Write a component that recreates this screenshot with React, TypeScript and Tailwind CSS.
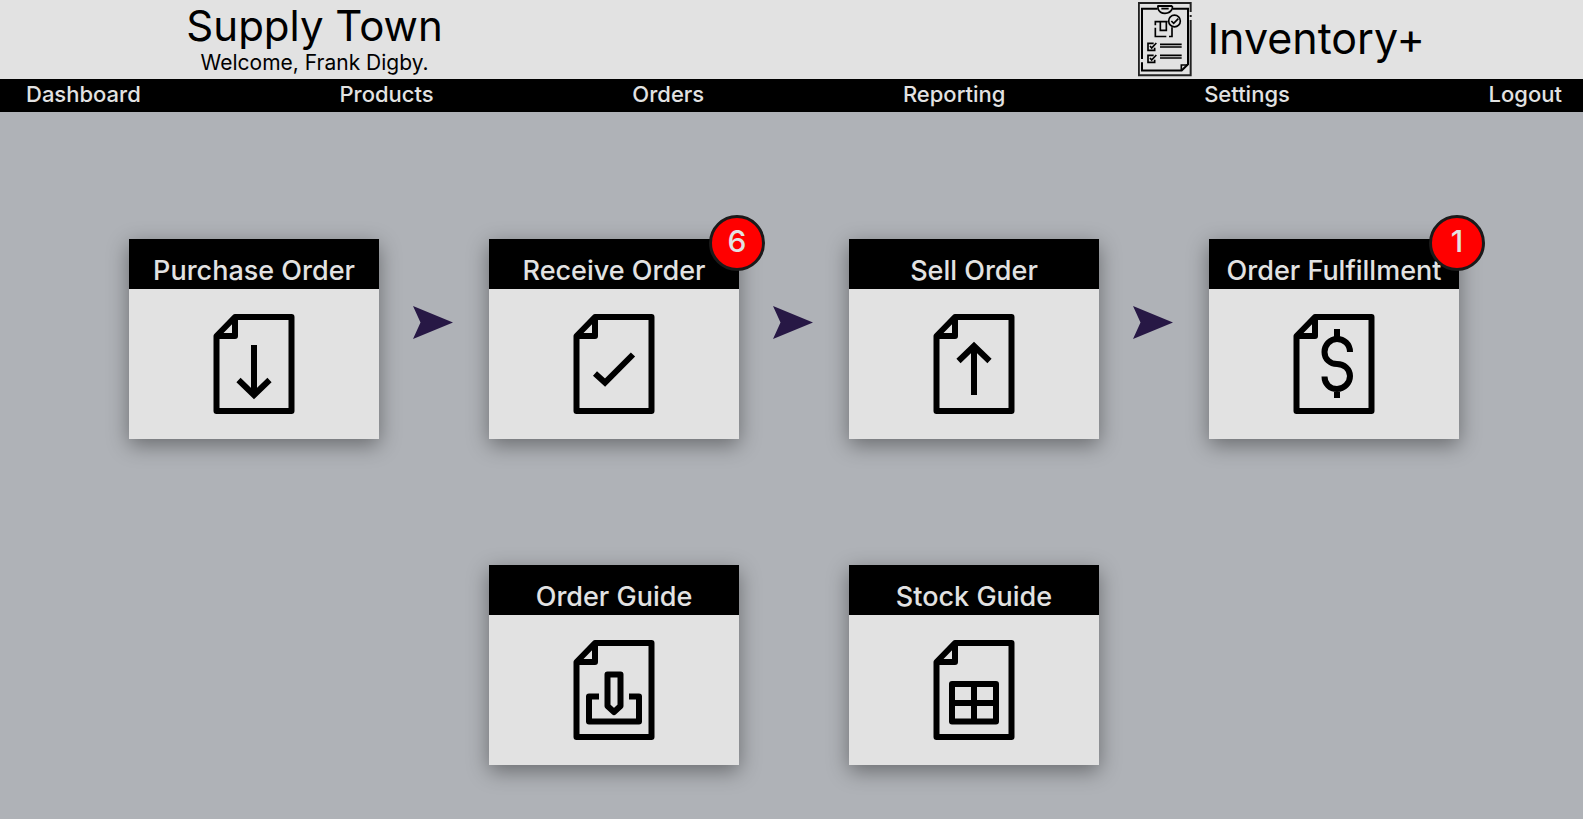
import type { ReactNode } from "react";

const navItems = ["Dashboard", "Products", "Orders", "Reporting", "Settings", "Logout"];

function Logo() {
  return (
    <svg viewBox="12 6 162 225" className="h-[75px] w-[54px]" fill="none" stroke="#000" strokeWidth="6" aria-hidden="true">
      <path d="M170 36V9H14.500V226H170V60M170 45v6" stroke="#222" />
      <path d="M70 26.500H24V177M24 187V211.500H143L162 193V26.500H117" />
      <path d="M142 210V195H162" strokeWidth="5" />
      <path d="M70 18H115" />
      <path d="M72 18V26Q77 40 93 40Q109 40 115 26V18M82 26H104" strokeWidth="5" />
      <path d="M64 76V65H101M64 83V109.500H97M105 109.500H114V82M79 66V91H97V66" strokeWidth="5" />
      <circle cx="121.500" cy="63" r="17.500" strokeWidth="5" />
      <path d="M112 63L119 70L133 56" strokeWidth="5" />
      <path d="M59 130H42V151H62V143M48 138L53 144L67 129" strokeWidth="5" />
      <path d="M59 166H42V187H62V179M48 174L53 180L67 165" strokeWidth="5" />
      <path d="M78 133H143M78 141H143M78 166H143M78 174H143" strokeWidth="5" />
    </svg>
  );
}

function DocIcon({ children }: { children: ReactNode }) {
  return (
    <svg viewBox="0 0 82 100" className="h-[100px] w-[82px]" fill="none" stroke="#000" strokeWidth="6" aria-hidden="true">
      <path d="M22 3H78.500V97H3.500V22Z" strokeLinejoin="round" />
      <path d="M22 3V22H3.500" strokeLinejoin="round" />
      {children}
    </svg>
  );
}

function Card({ title, badge, children }: { title: string; badge?: number; children: ReactNode }) {
  return (
    <a
      href="#"
      className="relative flex h-[200px] w-[250px] shrink-0 flex-col bg-[#e2e2e2] shadow-[0_6px_20px_0_rgba(0,0,0,0.4)]"
    >
      <h2 className="flex h-[50px] items-end justify-center bg-black pb-0.5 text-[27px] leading-8 font-medium whitespace-nowrap text-[#e2e2e2]">
        {title}
      </h2>
      <div className="flex flex-1 items-center justify-center">
        <DocIcon>{children}</DocIcon>
      </div>
      {badge !== undefined && (
        <span className="absolute -top-6 -right-[26px] flex size-14 items-center justify-center rounded-full border-3 border-[#1a1a1a] bg-[#ff0000] pb-1 text-[30px] leading-none font-medium text-[#e2e2e2]">
          {badge}
        </span>
      )}
    </a>
  );
}

function Arrow() {
  return (
    <div className="flex w-[110px] shrink-0 justify-center pt-[67px] pr-0.5">
      <svg viewBox="0 0 40 33" className="h-[33px] w-10" fill="#271845" aria-hidden="true">
        <path d="M0 0L40 16.500L0 33L7.500 16.500Z" />
      </svg>
    </div>
  );
}

export default function App() {
  return (
    <div className="flex min-h-screen flex-col bg-[#afb2b7] font-['Inter','Liberation_Sans',sans-serif]">
      <header className="flex h-[79px] justify-between bg-[#e2e2e2] text-black">
        <div className="flex w-2/5 flex-col items-center pt-0.5 pr-1 text-center">
          <h1 className="text-[42px] leading-[48px]">Supply Town</h1>
          <p className="text-[21px] leading-[26px]">Welcome, Frank Digby.</p>
        </div>
        <div className="flex w-[38%] items-center justify-center gap-4 pr-0.5">
          <Logo />
          <span className="pb-1 text-[43px] leading-[46px]">Inventory+</span>
        </div>
      </header>
      <nav className="flex h-[33px] items-center justify-between bg-black pr-[21px] pb-0.5 pl-[26px]">
        {navItems.map((item) => (
          <a key={item} href="#" className="text-[22px] leading-[31px] font-medium text-[#e2e2e2]">
            {item}
          </a>
        ))}
      </nav>
      <main className="flex flex-col gap-[126px] pt-[127px] pb-10 pl-[5px]">
        <div className="flex justify-center">
          <Card title="Purchase Order">
            <path d="M41 31V82M25.500 66L41 81L56.500 66" />
          </Card>
          <Arrow />
          <Card title="Receive Order" badge={6}>
            <path d="M22 59.500L32 68.500L60 40.500" />
          </Card>
          <Arrow />
          <Card title="Sell Order">
            <path d="M41 81V31M25.500 47L41 32L56.500 47" />
          </Card>
          <Arrow />
          <Card title="Order Fulfillment" badge={1}>
            <path d="M44 15V25M44 75V84M57 38C57 30 51 25 44 25C37 25 31.500 31 31.500 38C31.500 45 37 50 44 50C51 50 57 55 57 62C57 69 51 75 44 75C37 75 31.500 70 31.500 62.500" />
          </Card>
        </div>
        <div className="flex justify-center gap-[110px]">
          <Card title="Order Guide">
            <path d="M26 56.500H16V81.500H66V56.500H56M34.500 34.500H47.500V66L41 72L34.500 66Z" strokeLinejoin="round" />
          </Card>
          <Card title="Stock Guide">
            <path d="M19 44H63V81.500H19ZM41 44V81.500M19 63H63" strokeLinejoin="round" />
          </Card>
        </div>
      </main>
    </div>
  );
}
